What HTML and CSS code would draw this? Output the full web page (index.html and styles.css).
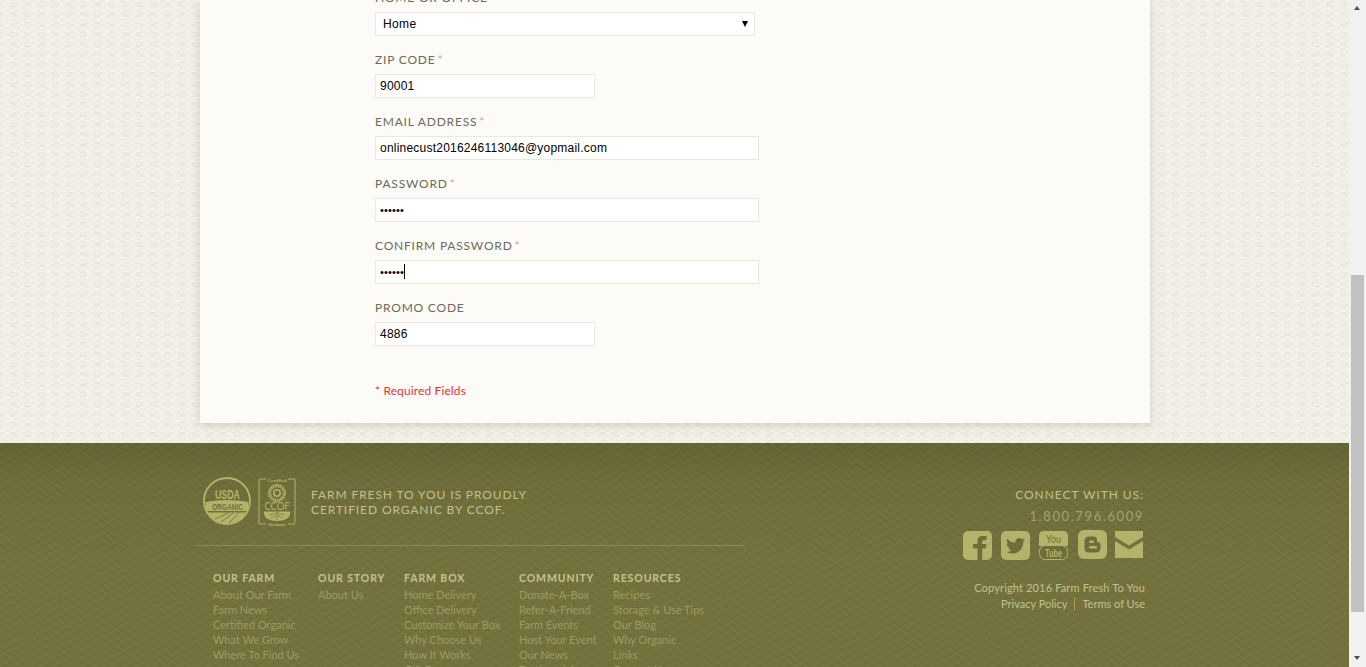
FILE: index.html
```html
<!DOCTYPE html>
<html lang="en">
<head>
<meta charset="utf-8">
<title>Farm Fresh To You</title>
<link rel="stylesheet" href="styles.css">
</head>
<body>
<div class="page">
  <main class="main">
    <form class="card">
      <div class="group select-wrap"><label class="label">HOME OR OFFICE</label>
        <select class="field select"><option>Home</option><option>Office</option></select></div>
      <div class="group"><label class="label">ZIP CODE<span class="req">*</span></label>
        <input class="field short" type="text" value="90001"></div>
      <div class="group"><label class="label">EMAIL ADDRESS<span class="req">*</span></label>
        <input class="field long" type="text" value="onlinecust2016246113046@yopmail.com"></div>
      <div class="group"><label class="label">PASSWORD<span class="req">*</span></label>
        <input class="field long pw" type="password" value="secret"></div>
      <div class="group"><label class="label">CONFIRM PASSWORD<span class="req">*</span></label>
        <input class="field long pw" type="password" value="secret"><span class="caret"></span></div>
      <div class="group"><label class="label">PROMO CODE</label>
        <input class="field short" type="text" value="4886"></div>
      <p class="required">* Required Fields</p>
    </form>
  </main>
  <footer class="footer">
    <div class="footer-inner">
      <div class="footer-left">
        <div class="certs">
          <svg class="usda" viewBox="0 0 48 48" width="48" height="48">
            <circle cx="24" cy="24" r="23" fill="none" stroke="#b5b36a" stroke-width="1.8"/>
            <text x="24.5" y="21.5" class="usda-top" text-anchor="middle" textLength="25" lengthAdjust="spacingAndGlyphs">USDA</text>
            <path d="M2.5 25 Q24 21 45.5 25 L45 34 H3Z" fill="#b5b36a"/>
            <text x="24.5" y="32.8" class="usda-mid" text-anchor="middle" textLength="31" lengthAdjust="spacingAndGlyphs">ORGANIC</text>
            <path d="M4 35.5 H44 C41 41 34 46.3 24 46.3 C14 46.3 7 41 4 35.5Z" fill="#b5b36a"/>
            <path d="M12 42 L26 35.5 M18 45 L31 35.5 M26 46 L36 35.5" stroke="#6f6e3a" stroke-width=".8" fill="none"/>
          </svg>
          <svg class="ccof" viewBox="0 0 38 49" width="38" height="49">
            <path d="M8 2 H2 Q1 2 1 3 V46 Q1 47 2 47 H8 M30 2 H36 Q37 2 37 3 V46 Q37 47 36 47 H30" fill="none" stroke="#b5b36a" stroke-width="1"/>
            <text x="19" y="4.5" class="ccof-small" text-anchor="middle">Certified</text>
            <circle cx="19" cy="16" r="7.5" fill="none" stroke="#b5b36a" stroke-width="3.4" stroke-dasharray="1.2 .6"/>
            <circle cx="19" cy="16" r="3.2" fill="none" stroke="#b5b36a" stroke-width="1.6"/>
            <text x="19" y="33" class="ccof-name" text-anchor="middle" textLength="25" lengthAdjust="spacingAndGlyphs">CCOF</text>
            <path d="M6 34.5 H32 V37 Q31 44 19 44 Q7 44 6 37Z" fill="#b5b36a"/>
            <path d="M19 34.5 V43 M19 38 L13 41 M19 38 L25 41 M19 36 L11 38 M19 36 L27 38" stroke="#6f6e3a" stroke-width=".6" fill="none"/>
            <text x="19" y="48.5" class="ccof-small" text-anchor="middle">Organic</text>
          </svg>
          <p class="cert-text">FARM FRESH TO YOU IS PROUDLY<br>CERTIFIED ORGANIC BY CCOF.</p>
        </div>
        <nav class="links">
          <div class="col">
            <h4>OUR FARM</h4>
            <a>About Our Farm</a><a>Farm News</a><a>Certified Organic</a><a>What We Grow</a><a>Where To Find Us</a>
          </div>
          <div class="col">
            <h4>OUR STORY</h4>
            <a>About Us</a>
          </div>
          <div class="col">
            <h4>FARM BOX</h4>
            <a>Home Delivery</a><a>Office Delivery</a><a>Customize Your Box</a><a>Why Choose Us</a><a>How It Works</a><a>Gift Boxes</a>
          </div>
          <div class="col">
            <h4>COMMUNITY</h4>
            <a>Donate-A-Box</a><a>Refer-A-Friend</a><a>Farm Events</a><a>Host Your Event</a><a>Our News</a><a>Testimonials</a>
          </div>
          <div class="col">
            <h4>RESOURCES</h4>
            <a>Recipes</a><a>Storage &amp; Use Tips</a><a>Our Blog</a><a>Why Organic</a><a>Links</a><a>Contact Us</a>
          </div>
        </nav>
      </div>
      <div class="footer-right">
        <p class="connect">CONNECT WITH US:</p>
        <p class="phone">1.800.796.6009</p>
        <div class="social">
          <svg viewBox="0 0 29 29" width="29" height="29"><rect width="29" height="29" rx="5" fill="#b5b36a"/><path d="M14.5 29 V17.5 H10 V13 H14.5 V10 C14.5 6.5 16.5 5 19.5 5 H23.5 V9.3 H21 C19.7 9.3 19.2 9.8 19.2 11 V13 H23.4 L22.8 17.5 H19.2 V29Z" fill="#6f6e3a"/></svg>
          <svg viewBox="0 0 29 29" width="29" height="29"><rect width="29" height="29" rx="5" fill="#b5b36a"/><g transform="translate(5 5.2) scale(.8)"><path d="M23.953 4.57a10 10 0 01-2.825.775 4.958 4.958 0 002.163-2.723c-.951.555-2.005.959-3.127 1.184a4.92 4.92 0 00-8.384 4.482C7.69 8.095 4.067 6.13 1.64 3.162a4.822 4.822 0 00-.666 2.475c0 1.71.87 3.213 2.188 4.096a4.904 4.904 0 01-2.228-.616v.06a4.923 4.923 0 003.946 4.827 4.996 4.996 0 01-2.212.085 4.936 4.936 0 004.604 3.417 9.867 9.867 0 01-6.102 2.105c-.39 0-.779-.023-1.17-.067a13.995 13.995 0 007.557 2.209c9.053 0 13.998-7.496 13.998-13.985 0-.21 0-.42-.015-.63A9.935 9.935 0 0024 4.59z" fill="#6f6e3a"/></g></svg>
          <svg viewBox="0 0 29 29" width="29" height="29"><path d="M0 15 V5 Q0 0 5 0 H24 Q29 0 29 5 V15Z" fill="#b5b36a"/><rect x=".5" y="14.5" width="28" height="14" rx="6" fill="#6f6e3a" stroke="#b5b36a"/><text x="14.5" y="12" class="yt" text-anchor="middle" textLength="15" lengthAdjust="spacingAndGlyphs">You</text><text x="14.5" y="26" class="yt yt-b" text-anchor="middle" textLength="17" lengthAdjust="spacingAndGlyphs">Tube</text></svg>
          <svg viewBox="0 0 29 29" width="29" height="29" class="blogger"><rect width="29" height="29" rx="6" fill="#b5b36a"/><path d="M11 6.5 H16 Q19 6.5 19 10 V12 Q22.5 12 22.5 14.5 V18 Q22.5 22.5 18 22.5 H11 Q6.5 22.5 6.5 18 V11 Q6.5 6.5 11 6.5Z" fill="#6f6e3a"/><rect x="11" y="10.5" width="5" height="2.6" rx="1.3" fill="#b5b36a"/><rect x="11" y="16" width="8" height="2.6" rx="1.3" fill="#b5b36a"/></svg>
          <svg viewBox="0 0 28 28" width="28" height="28"><path d="M0 0 H28 V6 L14 14.5 L0 6Z M0 10 L14 18.5 L28 10 V27 H0Z" fill="#b5b36a"/></svg>
        </div>
        <p class="copy">Copyright 2016 Farm Fresh To You</p>
        <p class="legal"><a>Privacy Policy</a><span class="sep"></span><a>Terms of Use</a></p>
      </div>
    </div>
  </footer>
</div>
<div class="scrollbar">
  <span class="arrow-up"></span>
  <div class="thumb"></div>
  <span class="arrow-down"></span>
</div>
</body>
</html>
```
FILE: styles.css
```css
* { box-sizing: border-box; }
html, body { margin: 0; padding: 0; height: 667px; overflow: hidden; }
body { font-family: Lato, "Liberation Sans", sans-serif; background: #f1f1f1; }
.page { width: 1349px; height: 667px; overflow: hidden; }
.main {
  height: 443px;
  background-color: #efece3;
  background-image:
    conic-gradient(rgba(255,255,255,.26) 25%, transparent 0),
    conic-gradient(rgba(255,255,255,.26) 25%, transparent 0),
    conic-gradient(rgba(205,198,180,.14) 25%, transparent 0);
  background-size: 10px 6px, 10px 6px, 14px 10px;
  background-position: 0 0, 5px 3px, 3px 2px;
}
.card {
  width: 950px;
  height: 423px;
  margin: 0 0 0 200px;
  padding: 0 0 0 175px;
  background: #fcfbf7;
  box-shadow: 0 2px 8px rgba(120,110,90,.25);
  display: flex;
  flex-direction: column;
}
.group { margin-bottom: 13px; position: relative; }
.group:first-child { margin-top: -13px; }
.label {
  display: block;
  height: 20px;
  margin-bottom: 5px;
  font-size: 12px;
  line-height: 22px;
  letter-spacing: .8px;
  color: #6b6b58;
}
.req { color: #d9a09a; margin-left: 2px; }
.field {
  display: block;
  height: 24px;
  background: #fff;
  border: 1px solid #ebe8e1;
  border-radius: 0;
  padding: 0 4px;
  font-family: "Liberation Sans", Arial, sans-serif;
  font-size: 12px;
  letter-spacing: .22px;
  color: #000;
  outline: none;
}
.select { width: 380px; padding: 0 7px; appearance: none; -webkit-appearance: none; letter-spacing: .35px; }
.select-wrap::after {
  content: "";
  position: absolute;
  left: 367px;
  top: 34px;
  border-style: solid;
  border-width: 6px 3.5px 0;
  border-color: #000 transparent transparent;
}
.short { width: 220px; }
.long { width: 384px; }
.pw { font-size: 11px; letter-spacing: .15px; }
.caret {
  position: absolute;
  left: 29px;
  top: 29px;
  width: 1px;
  height: 15px;
  background: #000;
}
.required {
  margin: 22px 0 0;
  height: 20px;
  font-size: 12px;
  line-height: 20px;
  letter-spacing: .12px;
  color: #e8322e;
}
.footer {
  height: 224px;
  overflow: hidden;
  background-color: #73723d;
  background-image:
    linear-gradient(to bottom, rgba(50,50,20,.22), rgba(50,50,20,.08) 40px, transparent 120px),
    repeating-linear-gradient(35deg, rgba(255,255,255,.025) 0 2px, transparent 2px 6px),
    repeating-linear-gradient(-30deg, rgba(0,0,0,.03) 0 2px, transparent 2px 7px);
}
.footer-inner {
  width: 958px;
  margin-left: 196px;
  display: flex;
  justify-content: space-between;
}
.footer-left { width: 549px; padding-top: 34px; }
.certs {
  display: flex;
  align-items: flex-start;
  height: 69px;
  padding-left: 7px;
  border-bottom: 1px solid #8d8c55;
}
.usda { margin-right: 7px; }
.ccof { margin-right: 15px; }
.usda-top { font: 700 13px "Liberation Sans", sans-serif; fill: #b5b36a; }
.usda-mid { font: 700 9px "Liberation Sans", sans-serif; fill: #6f6e3a; }
.ccof-small { font: 700 5px "Liberation Serif", serif; fill: #b5b36a; }
.ccof-name { font: 400 11px Lato, sans-serif; fill: #b5b36a; }
.cert-text {
  margin: 10px 0 0;
  font-size: 12px;
  line-height: 15px;
  letter-spacing: .9px;
  color: #c3c18c;
}
.links {
  display: grid;
  grid-template-columns: 105px 86px 115px 94px auto;
  padding: 24px 0 0 17px;
}
.col h4 {
  margin: 0 0 1px;
  height: 16px;
  font-size: 10.5px;
  line-height: 17px;
  font-weight: 700;
  letter-spacing: .9px;
  color: #c5c38f;
}
.col a {
  display: block;
  height: 15px;
  font-size: 11px;
  line-height: 15px;
  color: #9c9b62;
  white-space: nowrap;
}
.footer-right { width: 220px; padding: 44px 10px 0 0; text-align: right; }
.connect {
  margin: 0;
  font-size: 12px;
  line-height: 16px;
  letter-spacing: .95px;
  color: #c3c18c;
}
.phone {
  margin: 5px 0 0;
  font-size: 13px;
  line-height: 16px;
  letter-spacing: 1.6px;
  color: #a3a26a;
}
.social {
  display: flex;
  justify-content: flex-end;
  gap: 9px;
  margin: 7px 1px 0 0;
  height: 30px;
}
.social svg { display: block; }
.blogger { margin: -1px -1px 0 1px; }
.yt { font: 400 11px "Liberation Sans", sans-serif; fill: #6f6e3a; }
.yt-b { font-weight: 700; fill: #b5b36a; }
.copy {
  margin: 19px -1px 0 0;
  font-size: 11px;
  line-height: 16px;
  letter-spacing: .15px;
  color: #c3c18c;
}
.legal {
  margin: 0 -1px 0 0;
  display: flex;
  justify-content: flex-end;
  align-items: center;
  font-size: 11px;
  line-height: 16px;
  color: #c3c18c;
}
.sep { width: 1px; height: 14px; background: #b39a48; margin: 0 7px; }
.scrollbar {
  position: fixed;
  top: 0;
  right: 0;
  width: 17px;
  height: 667px;
  background: #f1f1f1;
}
.thumb {
  position: absolute;
  top: 275px;
  left: 2px;
  width: 13px;
  height: 337px;
  background: #c1c1c1;
}
.arrow-up, .arrow-down {
  position: absolute;
  left: 5px;
  border-style: solid;
  border-color: transparent;
}
.arrow-up { top: 6px; border-width: 0 3.5px 4px; border-bottom-color: #505050; }
.arrow-down { top: 656px; border-width: 4px 3.5px 0; border-top-color: #505050; }
```
